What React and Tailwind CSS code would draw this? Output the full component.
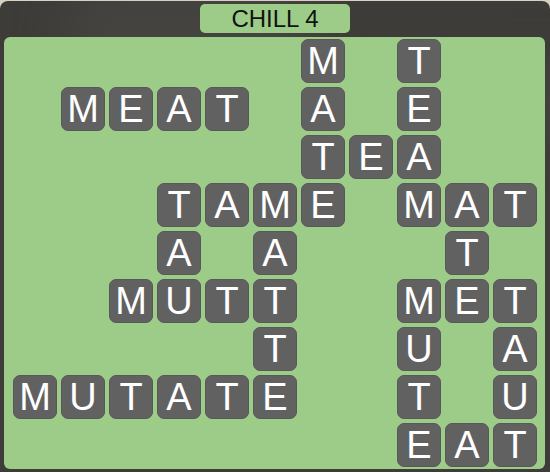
import React from "react";

const COL = ["col-start-1","col-start-2","col-start-3","col-start-4","col-start-5","col-start-6","col-start-7","col-start-8","col-start-9","col-start-10","col-start-11"];
const ROW = ["row-start-1","row-start-2","row-start-3","row-start-4","row-start-5","row-start-6","row-start-7","row-start-8","row-start-9"];

const words = [
  [0, 6, "M"], [0, 8, "T"],
  [1, 1, "MEAT"], [1, 6, "A"], [1, 8, "E"],
  [2, 6, "TEA"],
  [3, 3, "TAME"], [3, 8, "MAT"],
  [4, 3, "A"], [4, 5, "A"], [4, 9, "T"],
  [5, 2, "MUTT"], [5, 8, "MET"],
  [6, 5, "T"], [6, 8, "U"], [6, 10, "A"],
  [7, 0, "MUTATE"], [7, 8, "T"], [7, 10, "U"],
  [8, 8, "EAT"],
];

const tiles = [];
words.forEach(([r, c, w]) => {
  w.split("").forEach((ch, i) => tiles.push({ r, c: c + i, ch }));
});

export default function App() {
  return (
    <div className="w-[550px] h-[472px] bg-[#d9d2c3] overflow-hidden" style={{ fontFamily: '"Liberation Sans", Arial, sans-serif' }}>
      <div className="w-[550px] h-[472px] mt-[1px] rounded-t-[8px] bg-[#3d3c38] flex flex-col items-start relative overflow-hidden">
        <div className="absolute left-[60px] top-[-20px] w-[260px] h-[110px] rounded-full bg-[#4a4946] opacity-60 blur-xl"></div>
        <div className="absolute left-[470px] top-[60px] w-[120px] h-[80px] rounded-full bg-[#4a4946] opacity-50 blur-xl"></div>
        <div className="relative self-center mt-[3px] w-[150px] h-[29px] rounded-[5px] bg-[#9dcc89] flex items-center justify-center text-[24px] leading-none text-[#111]">
          CHILL 4
        </div>
        <div className="relative ml-[4px] mt-[4px] w-[541px] h-[432px] rounded-[6px] bg-[#9dcc89] pt-[2px] pl-[9px]">
          <div className="grid grid-cols-[repeat(11,44px)] grid-rows-[repeat(9,44px)] gap-[4px]">
            {tiles.map((t, i) => (
              <div
                key={i}
                className={`${COL[t.c]} ${ROW[t.r]} w-[44px] h-[44px] rounded-[7px] bg-[#616161] border border-[#585858] flex items-center justify-center text-white text-[38px] leading-none`}
              >
                {t.ch}
              </div>
            ))}
          </div>
        </div>
      </div>
    </div>
  );
}
